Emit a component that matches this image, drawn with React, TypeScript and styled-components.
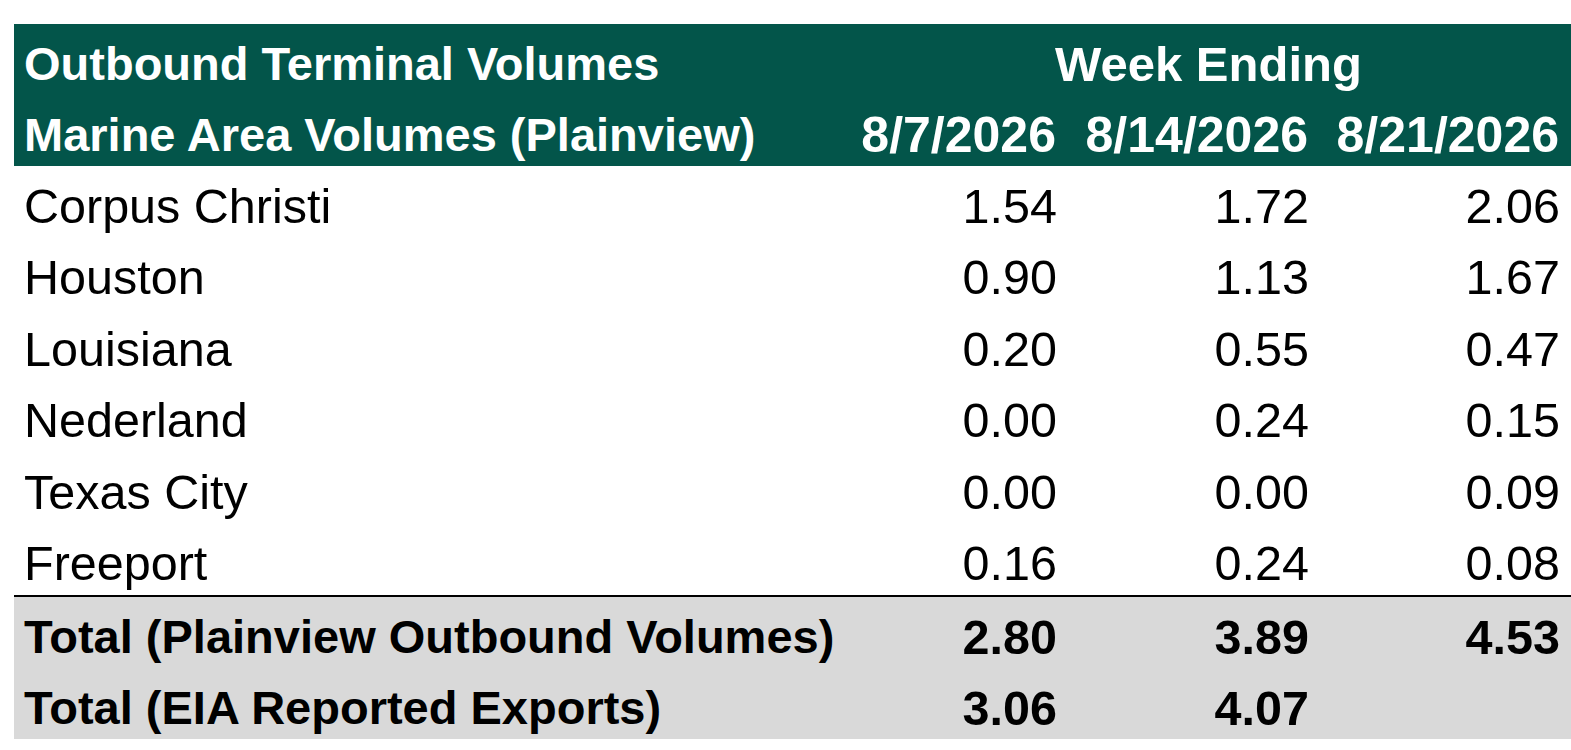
import styled, { createGlobalStyle } from "styled-components";

const GlobalStyle = createGlobalStyle`
  body {
    margin: 0;
    background: #ffffff;
    font-family: "Liberation Sans", Arial, sans-serif;
  }
`;

const Page = styled.div`
  padding: 24px 0 0 14px;
`;

const Grid = styled.div`
  display: grid;
  grid-template-columns: 832px 218px 252px 255px;
`;

const HeadCell = styled.div<{ $span?: number; $align?: string; $size?: number; $padRight?: number }>`
  grid-column: span ${({ $span }) => $span || 1};
  height: 71px;
  box-sizing: border-box;
  padding: 8px ${({ $padRight }) => $padRight ?? 10}px 0 10px;
  display: flex;
  align-items: center;
  justify-content: ${({ $align }) => $align || "flex-start"};
  background: #03554a;
  color: #ffffff;
  font-weight: 700;
  font-size: ${({ $size }) => $size || 47}px;
  white-space: nowrap;
`;

const Cell = styled.div<{ $num?: boolean; $total?: boolean; $first?: boolean; $padRight?: number }>`
  height: ${({ $first, $total }) => ($first ? 73 : $total ? 71 : 71.5)}px;
  box-sizing: border-box;
  padding: 8px ${({ $padRight }) => $padRight ?? 7}px 0 10px;
  display: flex;
  align-items: center;
  justify-content: ${({ $num }) => ($num ? "flex-end" : "flex-start")};
  background: ${({ $total }) => ($total ? "#d9d9d9" : "#ffffff")};
  color: #000000;
  font-weight: ${({ $total }) => ($total ? 700 : 400)};
  font-size: ${({ $total, $num }) => ($total && !$num ? 47 : 48.5)}px;
  white-space: nowrap;
  border-top: ${({ $first }) => ($first ? "2px solid #000" : "none")};
`;

const rows: [string, string, string, string][] = [
  ["Corpus Christi", "1.54", "1.72", "2.06"],
  ["Houston", "0.90", "1.13", "1.67"],
  ["Louisiana", "0.20", "0.55", "0.47"],
  ["Nederland", "0.00", "0.24", "0.15"],
  ["Texas City", "0.00", "0.00", "0.09"],
  ["Freeport", "0.16", "0.24", "0.08"],
];

const totals: [string, string, string, string][] = [
  ["Total (Plainview Outbound Volumes)", "2.80", "3.89", "4.53"],
  ["Total (EIA Reported Exports)", "3.06", "4.07", ""],
];

const App = () => {
  return (
    <Page>
      <GlobalStyle />
      <Grid>
        <HeadCell>Outbound Terminal Volumes</HeadCell>
        <HeadCell $span={3} $align="center" $size={49}>
          Week Ending
        </HeadCell>
        <HeadCell>Marine Area Volumes (Plainview)</HeadCell>
        <HeadCell $align="flex-end" $size={50} $padRight={8}>8/7/2026</HeadCell>
        <HeadCell $align="flex-end" $size={50} $padRight={8}>8/14/2026</HeadCell>
        <HeadCell $align="flex-end" $size={50} $padRight={12}>8/21/2026</HeadCell>

        {rows.map((r) =>
          r.map((v, i) => (
            <Cell key={r[0] + i} $num={i > 0} $padRight={i === 3 ? 11 : 7}>
              {v}
            </Cell>
          ))
        )}

        {totals.map((r, ri) =>
          r.map((v, i) => (
            <Cell
              key={r[0] + i}
              $num={i > 0}
              $total
              $first={ri === 0}
              $padRight={i === 3 ? 11 : 7}
            >
              {v}
            </Cell>
          ))
        )}
      </Grid>
    </Page>
  );
};

export default App;
